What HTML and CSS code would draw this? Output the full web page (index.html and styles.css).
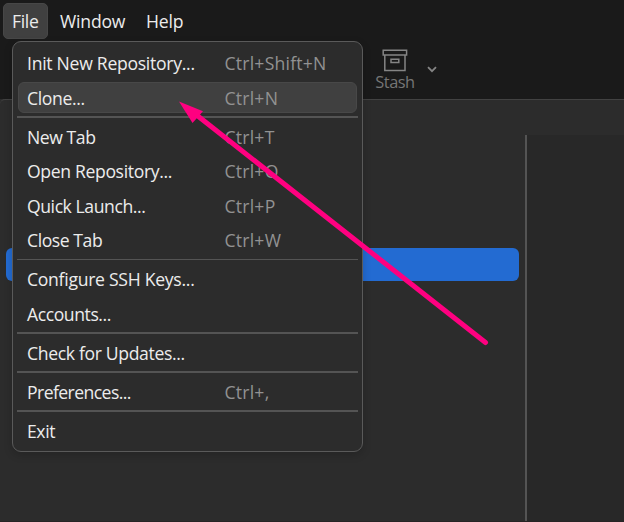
FILE: index.html
```html
<!DOCTYPE html>
<html lang="en">
<head>
<meta charset="utf-8">
<title>File menu</title>
<link rel="stylesheet" href="styles.css">
</head>
<body>
<div class="app">
  <nav class="menubar">
    <span class="tab tab-open">File</span>
    <span class="tab">Window</span>
    <span class="tab">Help</span>
  </nav>
  <header class="toolbar">
    <div class="stash">
      <svg class="box" width="26" height="24" viewBox="0 0 26 24" fill="none" stroke="#858585" stroke-width="1.5"><path d="M1.2 1.2H24.6V6H1.2ZM2.8 6V21.6H23V6M9 10.2H16.8V13.4H9Z"/></svg>
      <span>Stash</span>
    </div>
    <svg class="chevron" width="10" height="7" viewBox="0 0 10 7" fill="none" stroke="#858585" stroke-width="1.8"><path d="M1 1.2 5 5.2 9 1.2"/></svg>
  </header>
  <div class="strip"></div>
  <main class="panes">
    <section class="sidebar"><div class="selected"></div></section>
    <section class="content"></section>
  </main>
  <div class="edge"></div>
</div>

<div class="menu">
  <div class="item"><span class="loose">Init New Repository...</span><kbd>Ctrl+Shift+N</kbd></div>
  <div class="item active"><span>Clone...</span><kbd>Ctrl+N</kbd></div>
  <div class="sep"></div>
  <div class="item"><span class="tight">New Tab</span><kbd>Ctrl+T</kbd></div>
  <div class="item"><span>Open Repository...</span><kbd>Ctrl+O</kbd></div>
  <div class="item"><span class="tight">Quick Launch...</span><kbd>Ctrl+P</kbd></div>
  <div class="item"><span class="tight">Close Tab</span><kbd>Ctrl+W</kbd></div>
  <div class="sep thin"></div>
  <div class="item"><span class="loose">Configure SSH Keys...</span></div>
  <div class="item"><span class="tight">Accounts...</span></div>
  <div class="sep"></div>
  <div class="item"><span>Check for Updates...</span></div>
  <div class="sep"></div>
  <div class="item"><span class="tighter">Preferences...</span><kbd>Ctrl+,</kbd></div>
  <div class="sep"></div>
  <div class="item"><span class="tight">Exit</span></div>
</div>

<svg class="arrow" width="624" height="522" viewBox="0 0 624 522"><path d="M194 113 485.5 342.5" stroke="#ff0080" stroke-width="5" stroke-linecap="round"/><path d="M179 101.5 203 111.2 192.5 123Z" fill="#ff0080"/></svg>
</body>
</html>
```

FILE: styles.css
```css
* { box-sizing: border-box; }
body {
  margin: 0;
  width: 624px;
  height: 522px;
  overflow: hidden;
  position: relative;
  background: #2c2c2c;
  color: #ececec;
  font: 17.6px/24px "Open Sans", "Noto Sans", sans-serif;
  letter-spacing: -0.35px;
  white-space: nowrap;
}
.app { height: 522px; display: flex; flex-direction: column; }
.menubar {
  height: 42px;
  display: flex;
  align-items: flex-start;
  padding: 3px 0 0 3px;
  background: #1a1a1a;
}
.tab { height: 36px; padding: 6px 9px; border: 1px solid transparent; border-radius: 5px; line-height: 23px; letter-spacing: -0.2px; }
.tab-open { width: 45px; background: #404040; border-color: #474747; padding-left: 8px; letter-spacing: -0.35px; }
.tab:nth-child(2) { width: 88px; padding-left: 11px; }
.tab:nth-child(3) { padding-left: 9px; }
.toolbar {
  height: 57px;
  display: flex;
  padding: 7px 0 0 375px;
  background: #1a1a1a;
}
.stash {
  width: 40px;
  display: flex;
  flex-direction: column;
  align-items: center;
  color: #757575;
  font-size: 16.4px;
  line-height: 18px;
  letter-spacing: -0.5px;
}
.box { flex: none; }
.chevron { margin: 17px 0 0 12px; }
.strip { height: 36px; border-top: 1px solid #424242; border-top-left-radius: 5px; background: #2c2c2c; }
.panes { flex: 1; display: flex; }
.sidebar { width: 527px; padding: 113px 6px 0; border-right: 2px solid #545454; background: #2c2c2c; }
.selected { width: 513px; height: 33px; border-radius: 6px; background: #236bd2; }
.content { flex: 1; background: #282828; }
.edge { height: 1px; background: #272425; }
.menu {
  position: absolute;
  left: 12px;
  top: 41px;
  width: 351px;
  height: 411px;
  padding: 5.5px 4px 0;
  border: 1px solid #5a5a5a;
  border-radius: 9px;
  background: #2c2c2c;
  box-shadow: 0 3px 8px rgba(0, 0, 0, 0.18);
}
.item {
  height: 31px;
  margin: 0 1px 3.5px;
  padding: 1.2px 0 0 8px;
  border: 1px solid transparent;
  border-radius: 6px;
  display: grid;
  grid-template-columns: 197.5px 1fr;
  align-items: center;
  line-height: 27px;
}
.active { background: #404040; border-color: #484848; }
.loose { letter-spacing: -0.28px; }
.tight { letter-spacing: -0.43px; }
.tighter { letter-spacing: -0.57px; }
.sep { height: 2px; margin: -0.5px 0 3px; background: #545454; }
.thin { height: 1px; margin: 0 0 3.5px; }
kbd { font: inherit; color: #929292; letter-spacing: 0.22px; }
.arrow { position: absolute; left: 0; top: 0; }
```
